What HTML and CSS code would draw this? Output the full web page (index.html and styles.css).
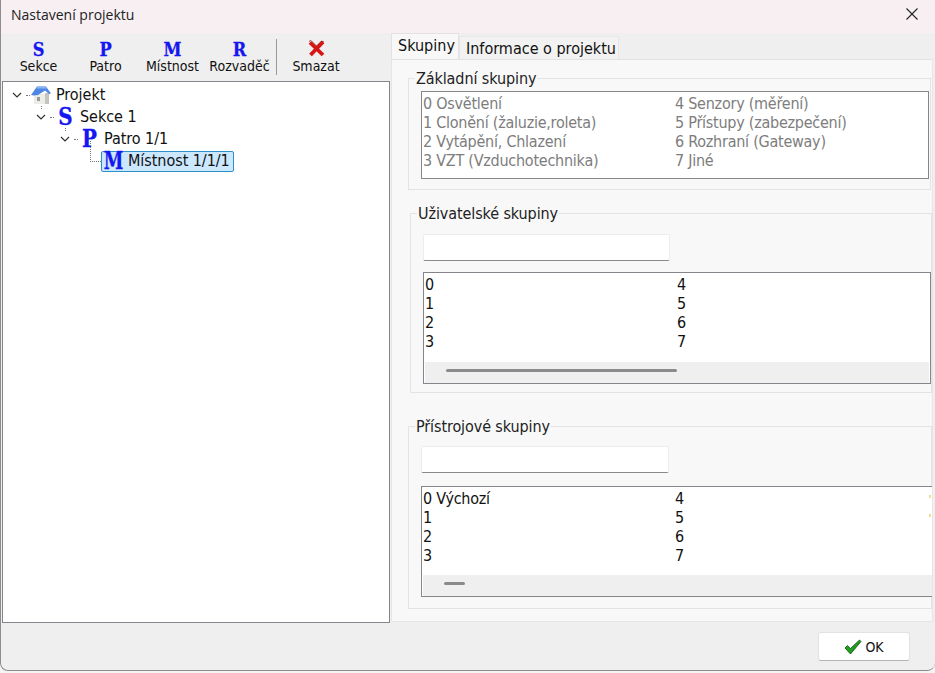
FILE: index.html
```html
<!DOCTYPE html>
<html>
    <head>
        <meta charset="utf-8" />
        <title>Nastavení projektu</title>
        <link rel="stylesheet" href="styles.css">
    </head>
    <body>
        <div id="window">
            <div id="titlebar">
                <div id="title">Nastavení projektu</div>
                <svg class="closeicon" width="12" height="12" viewBox="0 0 12 12"><path d="M.5.5l11 11M11.5.5l-11 11" stroke="#222" stroke-width="1.1" fill="none"/></svg>
            </div>
            <div id="main">
                <div id="left">
                    <div id="toolbar">
                        <div class="toolbutton"><span class="letter">S</span><span class="toollabel">Sekce</span></div>
                        <div class="toolbutton"><span class="letter">P</span><span class="toollabel">Patro</span></div>
                        <div class="toolbutton"><span class="letter">M</span><span class="toollabel">Místnost</span></div>
                        <div class="toolbutton"><span class="letter">R</span><span class="toollabel">Rozvaděč</span></div>
                        <div class="toolsep"></div>
                        <div class="toolbutton delete">
                            <svg class="deleteicon" width="17" height="17" viewBox="0 0 17 17"><path d="M2 2.5l13 12.5M15 2l-12.500 13" stroke="#d81414" stroke-width="3.800" fill="none"/><path d="M1 1.500l2-1 5.500 5.500L13.500 1l2.500 1" stroke="#8e1a1a" stroke-width=".8" fill="none"/></svg>
                            <span class="toollabel">Smazat</span>
                        </div>
                    </div>
                    <div id="tree">
                        <div class="treerow level0">
                            <svg class="chevron" width="10" height="6" viewBox="0 0 10 6"><path d="M1 1l4 4 4-4" stroke="#333" stroke-width="1.200" fill="none"/></svg>
                            <span class="dots"></span>
                            <svg class="houseicon" width="20" height="20" viewBox="0 0 20 20">
                                <path d="M3 9h15v10H3z" fill="#ecece8"/>
                                <path d="M14 8h4v11h-4z" fill="#c4c4be"/>
                                <path d="M6 12h3v4H6z" fill="#9b9b98"/>
                                <path d="M0 10L6 1.500h9l5 7-2 .5-4-3.500L7 10l-4 .500z" fill="#4f86e4"/>
                                <path d="M6.500 1.500h8l1.500 2H5.500z" fill="#8db4f2"/>
                            </svg>
                            <span class="treetext">Projekt</span>
                            <span class="stub"></span>
                        </div>
                        <div class="treerow level1">
                            <svg class="chevron" width="10" height="6" viewBox="0 0 10 6"><path d="M1 1l4 4 4-4" stroke="#333" stroke-width="1.200" fill="none"/></svg>
                            <span class="dots"></span>
                            <span class="treeletter">S</span>
                            <span class="treetext">Sekce 1</span>
                            <span class="stub"></span>
                        </div>
                        <div class="treerow level2">
                            <svg class="chevron" width="10" height="6" viewBox="0 0 10 6"><path d="M1 1l4 4 4-4" stroke="#333" stroke-width="1.200" fill="none"/></svg>
                            <span class="dots"></span>
                            <span class="treeletter">P</span>
                            <span class="treetext">Patro 1/1</span>
                        </div>
                        <div class="treerow level3">
                            <span class="elbow"></span>
                            <div class="selected">
                                <span class="treeletter">M</span>
                                <span class="treetext">Místnost 1/1/1</span>
                            </div>
                        </div>
                    </div>
                </div>
                <div id="right">
                    <div id="tabs">
                        <div class="tab active">Skupiny</div>
                        <div class="tab">Informace o projektu</div>
                    </div>
                    <div id="pane">
                        <fieldset class="group basic">
                            <legend>Základní skupiny</legend>
                            <div class="list disabled">
                                <div class="column">
                                    <div>0 Osvětlení</div>
                                    <div>1 Clonění (žaluzie,roleta)</div>
                                    <div>2 Vytápění, Chlazení</div>
                                    <div>3 VZT (Vzduchotechnika)</div>
                                </div>
                                <div class="column">
                                    <div>4 Senzory (měření)</div>
                                    <div>5 Přístupy (zabezpečení)</div>
                                    <div>6 Rozhraní (Gateway)</div>
                                    <div>7 Jiné</div>
                                </div>
                            </div>
                        </fieldset>
                        <fieldset class="group user">
                            <legend>Uživatelské skupiny</legend>
                            <div class="textbox"></div>
                            <div class="list scrolling">
                                <div class="listbody">
                                    <div class="column">
                                        <div>0</div>
                                        <div>1</div>
                                        <div>2</div>
                                        <div>3</div>
                                    </div>
                                    <div class="column">
                                        <div>4</div>
                                        <div>5</div>
                                        <div>6</div>
                                        <div>7</div>
                                    </div>
                                </div>
                                <div class="scrollbar"><div class="thumb longthumb"></div></div>
                            </div>
                        </fieldset>
                        <fieldset class="group device">
                            <legend>Přístrojové skupiny</legend>
                            <div class="textbox shorter"></div>
                            <div class="list scrolling wide">
                                <div class="listbody">
                                    <div class="column">
                                        <div>0 Výchozí</div>
                                        <div>1</div>
                                        <div>2</div>
                                        <div>3</div>
                                    </div>
                                    <div class="column">
                                        <div>4</div>
                                        <div>5</div>
                                        <div>6</div>
                                        <div>7</div>
                                    </div>
                                    <div class="marks">
                                        <span class="mark"></span>
                                        <span class="mark"></span>
                                    </div>
                                </div>
                                <div class="scrollbar"><div class="thumb shortthumb"></div></div>
                            </div>
                        </fieldset>
                    </div>
                </div>
            </div>
            <div id="footer">
                <div id="okbutton">
                    <svg width="18" height="16" viewBox="0 0 18 16"><path d="M1 9l2.500-2.500 3 3L15.500 1 17 2.500 6.500 15z" fill="#1f9e1f" stroke="#0d4f0d" stroke-width=".8"/></svg>
                    <span>OK</span>
                </div>
            </div>
        </div>
    </body>
</html>
```
FILE: styles.css
```css
body {
    margin: 0px;
    background: #f4f4f4;
    font-family: "DejaVu Sans", sans-serif;
    font-stretch: condensed;
    color: #111111;
    overflow: hidden;
}
#window {
    width: 935px;
    height: 671px;
    box-sizing: border-box;
    border-left: 1px solid #8c8c8c;
    border-bottom: 1px solid #8c8c8c;
    border-bottom-left-radius: 8px;
    border-bottom-right-radius: 8px;
    background: #efefef;
    overflow: hidden;
    display: flex;
    flex-direction: column;
}
#titlebar {
    height: 33px;
    flex: none;
    background: #f7eff2;
    display: flex;
    align-items: center;
    justify-content: space-between;
    padding: 0px 17px 5px 10px;
    box-sizing: border-box;
}
#title {
    font-family: "Open Sans", sans-serif;
    font-stretch: normal;
    font-size: 14px;
    color: #222222;
}
.closeicon {
    display: block;
}
#main {
    height: 590px;
    flex: none;
    display: flex;
}
#left {
    width: 389px;
    flex: none;
    display: flex;
    flex-direction: column;
}
#toolbar {
    height: 48px;
    flex: none;
    display: flex;
    padding: 8px 0px 0px 4px;
    box-sizing: border-box;
}
.toolbutton {
    width: 67px;
    display: flex;
    flex-direction: column;
    align-items: center;
    font-size: 14px;
}
.toolbutton.delete {
    width: 74px;
    margin-top: -1px;
}
.letter {
    font-family: "DejaVu Serif", serif;
    font-stretch: condensed;
    font-weight: bold;
    font-size: 18px;
    line-height: 17px;
    height: 16px;
    color: #1616f0;
    -webkit-text-stroke: 0.3px #1616f0;
}
.deleteicon {
    display: block;
}
.toollabel {
    line-height: 18px;
    white-space: nowrap;
}
.toolsep {
    width: 1px;
    height: 36px;
    margin: -2px 2px 0px 3px;
    background: #9a9a9a;
}
#tree {
    flex: 1;
    margin-left: 1px;
    background: white;
    border: 1px solid #85858b;
    padding-top: 2px;
    font-size: 16px;
    letter-spacing: -0.05px;
}
.treerow {
    height: 22px;
    display: flex;
    align-items: center;
    position: relative;
}
.level0 {
    padding-left: 9px;
}
.level1 {
    padding-left: 33px;
}
.level2 {
    padding-left: 57px;
}
.level3 {
    padding-left: 98px;
}
.chevron {
    flex: none;
}
.dots {
    width: 4px;
    margin: 0px 4px 0px 4px;
    border-top: 1px dotted #777777;
}
.level0 .dots {
    margin-right: 1px;
}
.houseicon {
    flex: none;
    margin-right: 5px;
}
.treeletter {
    font-family: "DejaVu Serif", serif;
    font-stretch: condensed;
    font-weight: bold;
    font-size: 24px;
    line-height: 20px;
    color: #1616f0;
    -webkit-text-stroke: 0.3px #1616f0;
    width: 15px;
    margin-right: 7px;
    display: flex;
    justify-content: center;
    transform: scaleX(0.92);
}
.treetext {
    white-space: nowrap;
    line-height: 20px;
}
.stub {
    position: absolute;
    bottom: -3px;
    width: 1px;
    height: 3px;
    border-left: 1px dotted #777777;
}
.level0 .stub {
    left: 38px;
}
.level1 .stub {
    left: 62px;
}
.elbow {
    position: absolute;
    left: 87px;
    top: -9px;
    width: 10px;
    height: 20px;
    border-left: 1px dotted #777777;
    border-bottom: 1px dotted #777777;
}
.selected {
    display: flex;
    align-items: center;
    width: 133px;
    box-sizing: border-box;
    height: 21px;
    padding: 0px 0px 0px 2px;
    background: #cce8ff;
    border: 1px solid #2f8fc8;
    border-radius: 2px;
}
.selected .treeletter {
    width: 19px;
    margin-right: 5px;
    transform: scaleX(0.82);
}
#right {
    flex: 1;
    min-width: 0px;
    margin-left: 1px;
    display: flex;
    flex-direction: column;
}
#tabs {
    height: 26px;
    flex: none;
    display: flex;
    align-items: flex-end;
    font-size: 16px;
}
.tab {
    height: 23px;
    line-height: 23px;
    padding: 0px 0px 0px 6px;
    background: #f2f2f2;
    border: 1px solid #e6e6e6;
    border-bottom: none;
    white-space: nowrap;
    box-sizing: border-box;
    width: 160px;
}
.tab.active {
    height: 26px;
    line-height: 24px;
    width: 68px;
    padding: 0px 6px;
    background: #f8f8f8;
    border-color: #e2e2e2;
}
#pane {
    width: 542px;
    height: 563px;
    box-sizing: border-box;
    background: #f8f8f8;
    border: 1px solid #e6e6e6;
    border-top-color: #e2e2e2;
    overflow: hidden;
    font-size: 16px;
}
.group {
    margin: 0px;
    min-width: 0px;
    box-sizing: border-box;
    border: 1px solid #e3e3e3;
}
.group legend {
    margin-left: -6px;
    padding: 0px 1px;
    height: 18px;
    line-height: 20px;
    color: #222222;
    letter-spacing: -0.1px;
}
.basic {
    margin: 9px 0px 0px 16px;
    width: 523px;
    padding: 4px 1px 10px 12px;
}
.user {
    margin: 14px 0px 0px 18px;
    width: 522px;
    padding: 12px 0px 8px 12px;
}
.device {
    margin: 24px 0px 0px 16px;
    width: 524px;
    padding: 11px 0px 11px 12px;
}
.textbox {
    width: 247px;
    height: 27px;
    box-sizing: border-box;
    background: white;
    border: 1px solid #ececec;
    border-bottom: 1px solid #8a8a8a;
    border-radius: 2px;
    margin-bottom: 11px;
}
.textbox.shorter {
    width: 248px;
    margin-bottom: 13px;
}
.list {
    background: white;
    border: 1px solid #85858b;
    box-sizing: border-box;
    line-height: 19px;
    display: flex;
    padding: 2px 0px 0px 1px;
    height: 88px;
    color: #111111;
    letter-spacing: -0.25px;
}
.disabled {
    color: #7d7d7d;
}
.column {
    width: 252px;
    flex: none;
    white-space: nowrap;
}
.scrolling {
    display: block;
    padding: 0px;
    height: 112px;
}
.scrolling.wide {
    width: 520px;
    height: 111px;
}
.listbody {
    height: 89px;
    box-sizing: border-box;
    padding: 2px 0px 0px 1px;
    display: flex;
    position: relative;
}
.wide .listbody {
    height: 88px;
}
.marks {
    position: absolute;
    left: 507px;
    top: 8px;
}
.mark {
    display: block;
    width: 2px;
    height: 3px;
    margin-bottom: 16px;
    background: #f0dc96;
}
.scrollbar {
    height: 21px;
    margin: 0px 1px;
    background: #efefef;
    padding: 7px 0px 0px 21px;
    box-sizing: border-box;
}
.thumb {
    height: 3px;
    background: #8a8a8a;
    border-radius: 2px;
}
.longthumb {
    width: 231px;
}
.shortthumb {
    width: 21px;
}
#footer {
    flex: 1;
    display: flex;
    justify-content: flex-end;
    padding: 9px 25px 0px 0px;
}
#okbutton {
    width: 92px;
    height: 29px;
    box-sizing: border-box;
    background: white;
    border: 1px solid #e2e2e2;
    border-bottom-color: #b5b5b5;
    border-radius: 3px;
    display: flex;
    align-items: center;
    justify-content: center;
    gap: 3px;
    font-size: 14px;
}
```
